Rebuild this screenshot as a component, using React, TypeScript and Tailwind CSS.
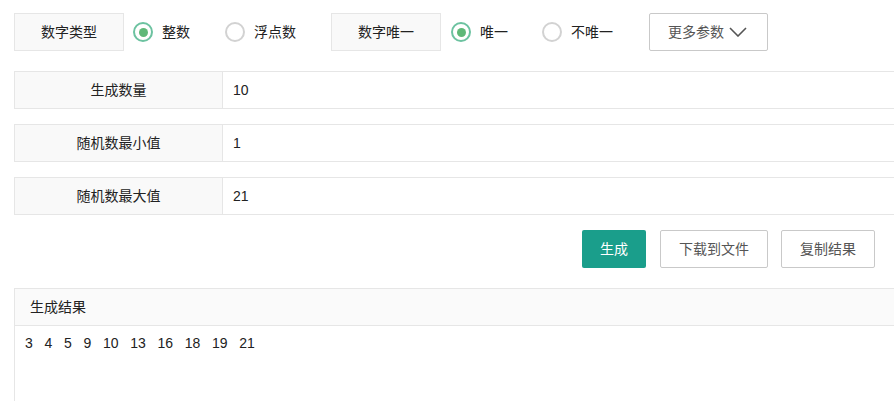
import React from "react";

const font = { fontFamily: '"Liberation Sans", "Noto Sans CJK SC", sans-serif' };

function Radio({ checked, label, className = "" }: { checked: boolean; label: string; className?: string }) {
  return (
    <div className={`flex items-center ${className}`}>
      <span
        className={`flex h-[20px] w-[20px] items-center justify-center rounded-full border-2 ${
          checked ? "border-[#6cc2a0]" : "border-[#d2d2d2]"
        }`}
      >
        {checked && <span className="h-[9px] w-[9px] rounded-full bg-[#5fb878]" />}
      </span>
      <span className="ml-[9px] text-[14px] text-[#222]">{label}</span>
    </div>
  );
}

function LabelBox({ text }: { text: string }) {
  return (
    <div className="flex h-[38px] w-[110px] items-center justify-center border border-[#e6e6e6] bg-[#f9f9f9] text-[14px] text-[#222]">
      {text}
    </div>
  );
}

function Row({ label, value }: { label: string; value: string }) {
  return (
    <div className="flex h-[38px] w-[920px] border border-[#e6e6e6] bg-white">
      <div className="flex w-[208px] items-center justify-center border-r border-[#e6e6e6] bg-[#f9f9f9] text-[14px] text-[#222]">
        {label}
      </div>
      <div className="flex items-center pl-[10px] text-[14px] text-[#222]">{value}</div>
    </div>
  );
}

export default function App() {
  const nums = [3, 4, 5, 9, 10, 13, 16, 18, 19, 21];
  return (
    <div className="h-[401px] w-[894px] overflow-hidden bg-white" style={font}>
      <div className="w-[930px] pl-[14px] pt-[13px]">
        {/* top options */}
        <div className="flex items-center">
          <LabelBox text="数字类型" />
          <Radio checked label="整数" className="ml-[9px]" />
          <Radio checked={false} label="浮点数" className="ml-[35px]" />
          <div className="ml-[35px]">
            <LabelBox text="数字唯一" />
          </div>
          <Radio checked label="唯一" className="ml-[10px]" />
          <Radio checked={false} label="不唯一" className="ml-[34px]" />
          <button className="ml-[36px] flex h-[38px] w-[119px] items-center rounded-[2px] border border-[#c9c9c9] bg-white pl-[18px] text-[14px] text-[#555]">
            更多参数
            <svg className="ml-[5px]" width="18" height="10" viewBox="0 0 18 10" fill="none">
              <path d="M1 1 L9 9 L17 1" stroke="#555" strokeWidth="1.6" />
            </svg>
          </button>
        </div>

        {/* input rows */}
        <div className="mt-[20px] flex flex-col gap-[15px]">
          <Row label="生成数量" value="10" />
          <Row label="随机数最小值" value="1" />
          <Row label="随机数最大值" value="21" />
        </div>

        {/* action buttons */}
        <div className="mt-[15px] flex w-[861px] justify-end">
          <button className="h-[38px] w-[64px] rounded-[2px] bg-[#1a9e8b] text-[14px] text-white">生成</button>
          <button className="ml-[14px] h-[38px] w-[108px] rounded-[2px] border border-[#c9c9c9] bg-white text-[14px] text-[#555]">
            下载到文件
          </button>
          <button className="ml-[13px] h-[38px] w-[94px] rounded-[2px] border border-[#c9c9c9] bg-white text-[14px] text-[#555]">
            复制结果
          </button>
        </div>

        {/* result panel */}
        <div className="mt-[20px] h-[140px] w-[920px] border border-[#e6e6e6] bg-white">
          <div className="flex h-[37px] items-center border-b border-[#e6e6e6] bg-[#fafafa] pl-[15px] text-[14px] text-[#222]">
            生成结果
          </div>
          <div className="flex pl-[10px] pt-[7px] text-[14px] leading-[20px] text-[#222]">
            {nums.map((n) => (
              <span key={n} className="mr-[11.7px]">
                {n}
              </span>
            ))}
          </div>
        </div>
      </div>
    </div>
  );
}
